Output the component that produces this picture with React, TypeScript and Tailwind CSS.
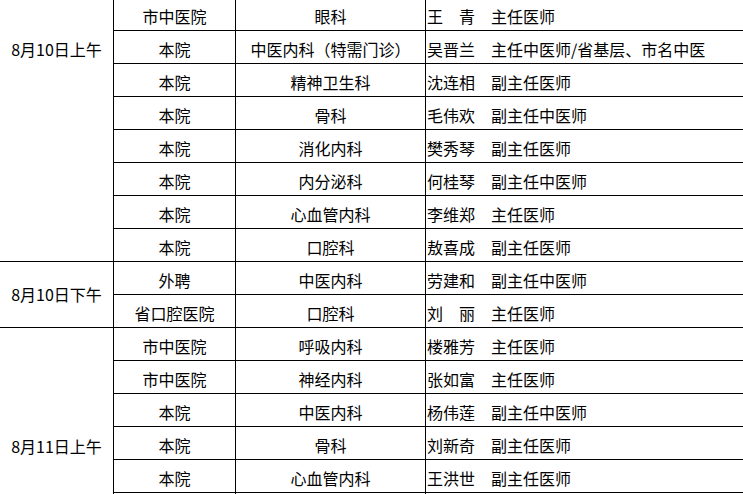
import React from "react";

type Row = { org: string; dept: string; doctor: string };

type Group = { label: string; rows: Row[]; labelPad: string };

const GROUPS: Group[] = [
  {
    label: "8月10日上午",
    labelPad: "pt-[43px]",
    rows: [
      { org: "市中医院", dept: "眼科", doctor: "王　青　主任医师" },
      { org: "本院", dept: "中医内科（特需门诊）", doctor: "吴晋兰　主任中医师/省基层、市名中医" },
      { org: "本院", dept: "精神卫生科", doctor: "沈连相　副主任医师" },
      { org: "本院", dept: "骨科", doctor: "毛伟欢　副主任中医师" },
      { org: "本院", dept: "消化内科", doctor: "樊秀琴　副主任医师" },
      { org: "本院", dept: "内分泌科", doctor: "何桂琴　副主任中医师" },
      { org: "本院", dept: "心血管内科", doctor: "李维郑　主任医师" },
      { org: "本院", dept: "口腔科", doctor: "敖喜成　副主任医师" },
    ],
  },
  {
    label: "8月10日下午",
    labelPad: "pt-[24px]",
    rows: [
      { org: "外聘", dept: "中医内科", doctor: "劳建和　副主任中医师" },
      { org: "省口腔医院", dept: "口腔科", doctor: "刘　丽　主任医师" },
    ],
  },
  {
    label: "8月11日上午",
    labelPad: "pt-[110px]",
    rows: [
      { org: "市中医院", dept: "呼吸内科", doctor: "楼雅芳　主任医师" },
      { org: "市中医院", dept: "神经内科", doctor: "张如富　主任医师" },
      { org: "本院", dept: "中医内科", doctor: "杨伟莲　副主任中医师" },
      { org: "本院", dept: "骨科", doctor: "刘新奇　副主任医师" },
      { org: "本院", dept: "心血管内科", doctor: "王洪世　副主任医师" },
      { org: "", dept: "", doctor: "" },
    ],
  },
];

const cell = "border border-black p-0 h-[33px] whitespace-nowrap";

export default function App() {
  return (
    <div className="h-[494px] w-[743px] overflow-hidden bg-white font-['Noto_Sans_CJK_SC',sans-serif] text-[16px] leading-none text-black">
      <table className="ml-[-1px] mt-[-3px] w-[800px] table-fixed border-collapse">
        <colgroup>
          <col className="w-[114px]" />
          <col className="w-[122px]" />
          <col className="w-[190px]" />
          <col className="w-[374px]" />
        </colgroup>
        <tbody>
          {GROUPS.map((group) =>
            group.rows.map((row, i) => (
              <tr key={group.label + i}>
                {i === 0 && (
                  <td
                    rowSpan={group.rows.length}
                    className={`border border-black p-0 text-center align-top ${group.labelPad}`}
                  >
                    {group.label}
                  </td>
                )}
                <td className={`${cell} pt-[3px] text-center`}>{row.org}</td>
                <td className={`${cell} pt-[3px] text-center`}>{row.dept}</td>
                <td className={`${cell} pt-[3px] pl-[1px] text-left`}>{row.doctor}</td>
              </tr>
            ))
          )}
        </tbody>
      </table>
    </div>
  );
}
